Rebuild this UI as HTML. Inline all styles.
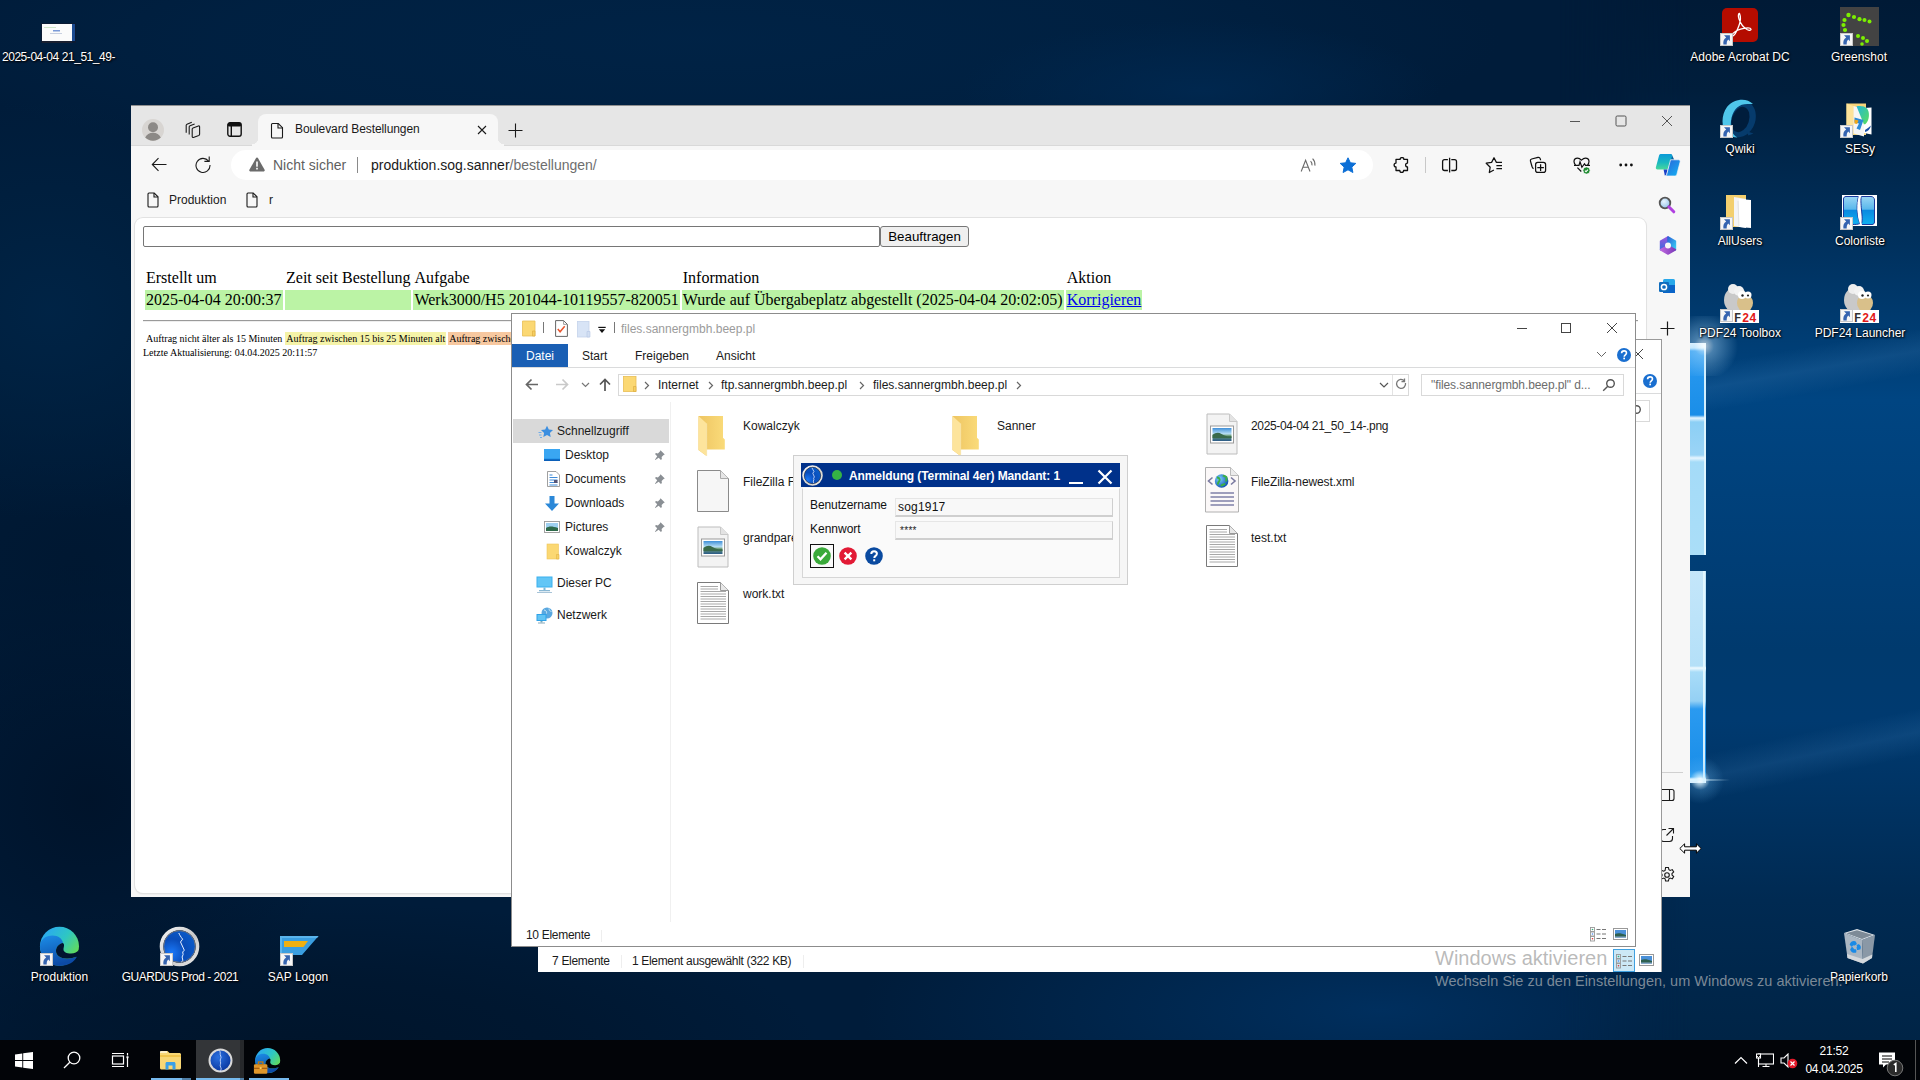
<!DOCTYPE html>
<html><head><meta charset="utf-8">
<style>
*{box-sizing:border-box}
html,body{margin:0;padding:0;width:1920px;height:1080px;overflow:hidden}
body{position:relative;font-family:"Liberation Sans",sans-serif;font-size:12px;color:#000;background:#001c3a}
.a{position:absolute}
.dt{position:absolute;color:#fff;font-size:12px;text-align:center;text-shadow:0 0 2px #000,1px 1px 2px #000;white-space:nowrap;line-height:15px}
/* browser */
#br{left:131px;top:105px;width:1559px;height:792px;background:#f7f7f7;overflow:hidden}
#tabs{left:0;top:0;width:1559px;height:41px;background:#e6e6e6;border-bottom:1px solid #d9d9d9}
#card{left:4px;top:113px;width:1511px;height:675px;background:#fff;border-radius:8px;box-shadow:0 0 0 1px #e2e2e2,0 1px 2px rgba(0,0,0,.12)}
.serif{font-family:"Liberation Serif",serif}
/* explorer */
.ex{position:absolute;background:#fff;border:1px solid #9a9a9a;overflow:hidden}
/* taskbar */
#tb{left:0;top:1040px;width:1920px;height:40px;background:#020408}
</style></head>
<body>

<svg width="0" height="0" style="position:absolute">
 <defs>
  <linearGradient id="fback" x1="0" y1="0" x2="1" y2="0"><stop offset="0" stop-color="#eec562"/><stop offset="1" stop-color="#fadb7a"/></linearGradient>
  <linearGradient id="imgsky" x1="0" y1="0" x2="0" y2="1"><stop offset="0" stop-color="#3f8fd8"/><stop offset=".45" stop-color="#b8def4"/><stop offset=".6" stop-color="#6a9a70"/><stop offset="1" stop-color="#2a5a8a"/></linearGradient>
  <radialGradient id="globe" cx=".35" cy=".35" r=".7"><stop offset="0" stop-color="#7fd0ff"/><stop offset="1" stop-color="#0b4fb0"/></radialGradient>
  <symbol id="bigfolder" viewBox="0 0 32 42">
   <path d="M1.5 2H26V23.8l1.8 1.7V35.6H9.5V42L1.5 36z" fill="url(#fback)"/>
   <path d="M1.5 2L9.7 9.5V42L1.5 36z" fill="#fde49c"/>
   <path d="M9.7 9.5V42" stroke="#f7eab8" stroke-width=".6"/>
  </symbol>
  <symbol id="blankdoc" viewBox="0 0 32 42">
   <path d="M.5 .5H23.5L31.5 8.5V41.5H.5z" fill="#f6f6f6" stroke="#8a8a8a" stroke-width="1"/>
   <path d="M23.5 .5V8.5H31.5" fill="#e6e6e6" stroke="#aaa" stroke-width="1"/>
  </symbol>
  <symbol id="imgdoc" viewBox="0 0 32 42">
   <path d="M1 1H23.5L31 8.5V41H1z" fill="#f3f3f3" stroke="#bdbdbd" stroke-width="1"/>
   <path d="M23.5 1V8.5H31" fill="#e3e3e3" stroke="#c8c8c8" stroke-width="1"/>
   <rect x="4.5" y="13" width="23" height="17" fill="#fff" stroke="#9a9a9a" stroke-width="1"/>
   <rect x="6.5" y="15" width="19" height="13" fill="url(#imgsky)"/>
   <path d="M6.5 22c3-2.5 6-3 9-1s6 2.5 10 2.2V25H6.5z" fill="#3a6a4a"/>
  </symbol>
  <symbol id="txtdoc" viewBox="0 0 32 42">
   <path d="M.5 .5H23.5L31.5 8.5V41.5H.5z" fill="#fff" stroke="#7a7a7a" stroke-width="1"/>
   <path d="M23.5 .5V8.5H31.5" fill="#e8e8e8" stroke="#9a9a9a" stroke-width="1"/>
   <g stroke="#a8a8a8" stroke-width="1"><path d="M3.5 4.5H21M3.5 7H21M3.5 9.5H29M3.5 12H29M3.5 14.5H29M3.5 17H29M3.5 19.5H29M3.5 22H29M3.5 24.5H29M3.5 27H29M3.5 29.5H29M3.5 32H29M3.5 34.5H29M3.5 37H29"/></g>
  </symbol>
  <symbol id="xmldoc" viewBox="0 0 36 47">
   <path d="M1.5 1.5H26.5L34.5 9.5V46H1.5z" fill="#fbf8f8" stroke="#b0b0b0" stroke-width="1"/>
   <path d="M26.5 1.5V9.5H34.5" fill="#ececec" stroke="#bbb" stroke-width="1"/>
   <circle cx="17.6" cy="15" r="6.8" fill="url(#globe)"/>
   <path d="M13 11.5c2 0 3 1.5 2.5 3s-2 2-1.5 4M19 9.5c1.5 1 3 .5 3.5 2s-1 2.5 0 4M17 20c1-1.5 3-1 4-2.5" stroke="#3cb043" stroke-width="2" fill="none"/>
   <path d="M8.5 11.5L4.5 15l4 3.5M27 11.5L31 15l-4 3.5" stroke="#7a7aa0" stroke-width="1.6" fill="none"/>
   <g stroke="#8080a8" stroke-width="1.6"><path d="M6.5 27H30M6.5 31H30M6.5 35H30M6.5 39H30"/></g>
  </symbol>
  <symbol id="smfolder" viewBox="0 0 16 16">
   <path d="M1.5 1.5H12.5V10.8l1.3 1.2V15H5.5z" fill="#f0c75e"/>
   <path d="M1.5 1.5L5.5 3V15L1.5 14z" fill="#fde59e"/>
   <rect x="1.5" y="1.5" width="11.5" height="13.5" fill="#fbd874"/>
   <path d="M12 11h1.8v4H12z" fill="#f3cc63"/>
   <path d="M11.8 10.7v4.3" stroke="#e8b94a" stroke-width=".8"/>
  </symbol>
  <symbol id="pin" viewBox="0 0 12 12"><path d="M6.5 1.2l4.3 4.3-1.2.6-2 2 .3 1.9-1 1-2.2-2.2L1.3 11.1.9 10.7l2.3-3.4L1 5.1l1-1 1.9.3 2-2z" fill="#8a8f94"/></symbol>
  <symbol id="sc" viewBox="0 0 13 13"><rect x="0" y="0" width="13" height="13" fill="#f6f6f6"/><rect x=".5" y=".5" width="12" height="12" fill="none" stroke="#c8c8c8" stroke-width="1"/><path d="M9.9 2.2V8.2L8.3 6.6C7 7.6 6.6 9.3 6.7 11.6L3.4 11.6C3 8.4 3.8 6 6.2 4.6L4 2.2Z" fill="#3564b0"/></symbol>
 </defs>
</svg>
<!-- wallpaper -->
<div class="a" style="left:0;top:0;width:1920px;height:1040px;background:
 radial-gradient(ellipse 520px 150px at 1380px 1010px, rgba(0,48,96,0.95) 0%, rgba(0,44,88,0.6) 50%, rgba(0,36,72,0) 100%),
 radial-gradient(ellipse 520px 150px at 300px 1050px, rgba(0,20,42,0.95) 0%, rgba(0,20,42,0.6) 50%, rgba(0,20,42,0) 100%),
 radial-gradient(ellipse 240px 70px at 1200px 90px, rgba(0,40,80,0.9) 0%, rgba(0,40,80,0) 100%),
 radial-gradient(ellipse 800px 140px at 700px 40px, rgba(0,35,70,0.95) 0%, rgba(0,34,68,0.7) 60%, rgba(0,30,60,0) 100%),
 radial-gradient(ellipse 240px 210px at 50px 310px, rgba(0,36,70,0.95) 0%, rgba(0,34,66,0.6) 50%, rgba(0,30,60,0) 100%),
 radial-gradient(ellipse 300px 200px at 80px 560px, rgba(0,22,46,0.7) 0%, rgba(0,22,46,0) 100%),
 radial-gradient(ellipse 250px 240px at 90px 800px, rgba(0,18,40,0.85) 0%, rgba(0,18,40,0) 100%),
 #001c3a"></div>
<div class="a" style="left:1560px;top:0;width:360px;height:1040px;background:linear-gradient(180deg,#001a36 0,#001e3c 90px,#003260 255px,#004582 400px,#003e76 560px,#003a6e 650px,#003a70 720px,#002a52 900px,#002446 1040px);-webkit-mask-image:linear-gradient(90deg,transparent 0,#000 130px);mask-image:linear-gradient(90deg,transparent 0,#000 130px)"></div>
<!-- light rays -->
<div class="a" style="left:1700px;top:330px;width:220px;height:80px;background:linear-gradient(170deg, rgba(140,200,255,0) 30%, rgba(140,200,255,0.10) 50%, rgba(140,200,255,0) 70%)"></div>
<div class="a" style="left:1700px;top:700px;width:220px;height:110px;background:linear-gradient(-12deg, rgba(140,200,255,0) 35%, rgba(120,190,255,0.10) 50%, rgba(140,200,255,0) 65%)"></div>
<!-- windows logo panes (only right edges visible) -->
<div class="a" style="left:1600px;top:343px;width:106px;height:212px;background:linear-gradient(180deg,#eef8ff 0,#cfeeff 5px,#2a9af0 8px,#1a8ee8 72px,#e8f6ff 75px,#8ccff5 79px,#9ad4f6 112px,#e8f6ff 115px,#a4dbf8 119px,#aadef8 212px)"></div>
<div class="a" style="left:1704px;top:343px;width:2px;height:212px;background:rgba(230,248,255,0.9)"></div>
<div class="a" style="left:1600px;top:571px;width:106px;height:212px;background:linear-gradient(180deg,#c4e6fa 0,#b4e0f8 95px,#f0faff 97px,#a8dcf8 101px,#94d0f4 130px,#2a9af0 138px,#1a8ee8 200px,#2aa0f0 206px,#f4fbff 208px)"></div>
<div class="a" style="left:1703px;top:571px;width:2px;height:212px;background:rgba(230,248,255,0.9)"></div>
<div class="a" style="left:1670px;top:750px;width:60px;height:60px;background:radial-gradient(circle at 50% 50%, rgba(255,255,255,0.95) 0, rgba(210,240,255,0.75) 4px, rgba(120,200,255,0.22) 10px, rgba(120,200,255,0) 24px)"></div>
<div class="a" style="left:1690px;top:779px;width:40px;height:2px;background:linear-gradient(90deg,rgba(220,245,255,.8),rgba(220,245,255,0))"></div>
<div class="a" style="left:1676px;top:316px;width:70px;height:60px;background:radial-gradient(circle at 40% 50%, rgba(255,255,255,0.7) 0, rgba(180,225,255,0.4) 10px, rgba(120,200,255,0) 34px)"></div>

<!-- desktop icons -->
<svg class="a" style="left:41px;top:23px" width="35" height="20" viewBox="0 0 35 20"><rect x="0" y="0" width="35" height="20" fill="#0a1a33"/><rect x="1" y="1" width="30" height="17" fill="#fbfbfb"/><rect x="31" y="1" width="3" height="17" fill="#1a4a90"/><rect x="3" y="4" width="12" height="1" fill="#cfe6c9"/><rect x="12" y="7" width="7" height="1.5" fill="#7a9ad8"/><rect x="9" y="10" width="12" height="1" fill="#c8d0e0"/><rect x="1" y="18" width="30" height="2" fill="#1a2030"/></svg>
<div class="dt" style="left:0;top:50px;width:117px;letter-spacing:-0.45px">2025-04-04 21_51_49-</div>

<svg class="a" style="left:1722px;top:8px" width="36" height="34" viewBox="0 0 36 34"><rect x="0" y="0" width="36" height="34" rx="5" fill="#b40c00"/><path d="M17.5 5.5c-1.3 0-1.5 2.5-.5 5.5 1.5 4.5 4.5 8.5 8 10.5 2.5 1.3 4.2.8 4-.3-.3-1.2-3.2-1.5-7-.8-4 .7-8.5 2.5-11 5-1.5 1.5-1.5 2.8-.5 2.6 1.5-.3 4.5-5 6.5-10.5 1.3-3.6 2-8.6.5-12z" fill="none" stroke="#fff" stroke-width="1.3"/></svg>
<svg class="a" style="left:1720px;top:33px" width="13" height="13"><use href="#sc"/></svg>
<div class="dt" style="left:1670px;top:50px;width:140px">Adobe Acrobat DC</div>

<svg class="a" style="left:1840px;top:7px" width="39" height="39" viewBox="0 0 39 39"><rect width="39" height="39" fill="#434343"/><g fill="#7cf000"><circle cx="8.5" cy="8" r="2.2"/><circle cx="14" cy="10" r="2.1"/><circle cx="19.5" cy="12.2" r="2.1"/><circle cx="24.5" cy="13" r="2"/><circle cx="29.5" cy="14.5" r="2"/><circle cx="4.5" cy="13" r="2.1"/><circle cx="3.5" cy="18" r="2.1"/><circle cx="5" cy="23" r="2.1"/><circle cx="18" cy="29" r="2"/><circle cx="23" cy="31" r="2"/><circle cx="27" cy="34" r="2"/><circle cx="22" cy="37" r="1.8"/></g></svg>
<svg class="a" style="left:1840px;top:33px" width="13" height="13"><use href="#sc"/></svg>
<div class="dt" style="left:1800px;top:50px;width:118px">Greenshot</div>

<svg class="a" style="left:1715px;top:95px" width="50" height="50" viewBox="0 0 50 50"><ellipse cx="25" cy="23.5" rx="15.5" ry="19" transform="rotate(18 25 23.5)" fill="#063b6c"/><path d="M31 36l7.5 2.5-5 2z" fill="#063b6c"/><ellipse cx="25.5" cy="24.5" rx="8.5" ry="13" transform="rotate(18 25.5 24.5)" fill="#001d3c"/><path d="M38 9C31.5 2.5 19 3.5 12 12 6 20 6 33 12 39c3 2.5 7 3.5 10.5 3.5-5.5-3-7.5-8.5-6.5-16.5 1-9 6-16 13.5-16.8 3-.3 6-.4 8.5-.2z" fill="#4fc6ea"/></svg>
<svg class="a" style="left:1720px;top:125px" width="13" height="13"><use href="#sc"/></svg>
<div class="dt" style="left:1690px;top:142px;width:100px">Qwiki</div>

<svg class="a" style="left:1846px;top:103px" width="26" height="34" viewBox="0 0 26 34"><defs><linearGradient id="sg" x1="0" y1="0" x2="1" y2="1"><stop offset="0" stop-color="#22b8d8"/><stop offset="1" stop-color="#5ade5a"/></linearGradient></defs><path d="M.5 .5H20V32H.5z" fill="#f6d47a"/><path d="M.5 .5L7.5 3V32H.5z" fill="#fde39a"/><path d="M7.5 3L18 6V33.5L7.5 30.5z" fill="#f6f6f6"/><path d="M18 5L25.5 4.5V31.5L18 30z" fill="#fff"/><path d="M10.5 3.2C14.5 2.5 19 3 21 5.5 24 9 23.5 17 20 20.5 19 21.5 18 21.5 17.8 21z" fill="url(#sg)"/><path d="M8.5 14.5L17.5 17 14 27 10.5 25.5 13 20.5 8.5 19.5z" fill="#2a8ad8"/><path d="M8.5 16.5L12.5 17.5 11 21 8.5 20.5z" fill="#f0a818"/><path d="M19 27C21 26 23 24 25 22.5 24 26 22 28.5 19 29z" fill="#1a50a8"/></svg>
<svg class="a" style="left:1840px;top:125px" width="13" height="13"><use href="#sc"/></svg>
<div class="dt" style="left:1810px;top:142px;width:100px">SESy</div>

<svg class="a" style="left:1726px;top:195px" width="26" height="34" viewBox="0 0 26 34"><path d="M0 0h20v24l5 2V32H0z" fill="#f3cf6e"/><path d="M8 2L20 4V33L8 31z" fill="#f4f4f6"/><path d="M13 4L25 5V33L13 32z" fill="#fff"/><path d="M12 6L13 31" stroke="#ddd" stroke-width=".8"/></svg>
<svg class="a" style="left:1720px;top:217px" width="13" height="13"><use href="#sc"/></svg>
<div class="dt" style="left:1690px;top:234px;width:100px">AllUsers</div>

<svg class="a" style="left:1842px;top:195px" width="35" height="31" viewBox="0 0 35 31"><defs><linearGradient id="clg" x1="0" y1="0" x2="0" y2="1"><stop offset="0" stop-color="#9ad6f4"/><stop offset=".45" stop-color="#5ab8ec"/><stop offset=".5" stop-color="#0a8ae0"/><stop offset="1" stop-color="#10b0f0"/></linearGradient></defs><rect width="35" height="31" fill="#fff"/><path d="M4 1.5H16.5C14.5 8 14.5 20 18 28.5 16 29.5 13 29.5 10 29.5H4C2.3 29.5 1.5 28.5 1.5 27V4C1.5 2.5 2.5 1.5 4 1.5Z" fill="url(#clg)" stroke="#1a3aa0" stroke-width="1"/><path d="M19.5 1.5H29C31 1.5 32.5 3 32.5 5V27C32.5 28.5 31.5 29.5 30 29.5H19C21 27 20 20 19.5 15 19 9 18.5 4 19.5 1.5Z" fill="url(#clg)" stroke="#1a3aa0" stroke-width="1"/><path d="M17.8 .5C15.5 8 15.5 21 19.3 30.5" stroke="#fff" stroke-width="1.8" fill="none"/></svg>
<svg class="a" style="left:1840px;top:217px" width="13" height="13"><use href="#sc"/></svg>
<div class="dt" style="left:1810px;top:234px;width:100px">Colorliste</div>

<svg class="a" style="left:1720px;top:283px" width="40" height="40" viewBox="0 0 40 40"><ellipse cx="16" cy="17" rx="12" ry="13" fill="#c9c9c9"/><circle cx="13" cy="6" r="5" fill="#eee"/><circle cx="19" cy="8" r="5" fill="#f2f2f2"/><ellipse cx="25" cy="20" rx="8" ry="9" fill="#d9c08a"/><circle cx="22" cy="12" r="4" fill="#fff"/><circle cx="28" cy="12" r="3.5" fill="#fff"/><circle cx="22.5" cy="12.5" r="1.2" fill="#222"/><circle cx="28" cy="12.5" r="1.1" fill="#222"/><rect x="0" y="27" width="39" height="13" fill="#fff"/><text x="14" y="38.5" font-family="Liberation Mono" font-weight="bold" font-size="12" fill="#333">F</text><text x="22" y="38.5" font-family="Liberation Mono" font-weight="bold" font-size="12" fill="#e21a1a">24</text></svg>
<svg class="a" style="left:1720px;top:309px" width="13" height="13"><use href="#sc"/></svg>
<div class="dt" style="left:1680px;top:326px;width:120px">PDF24 Toolbox</div>

<svg class="a" style="left:1840px;top:283px" width="40" height="40" viewBox="0 0 40 40"><ellipse cx="16" cy="17" rx="12" ry="13" fill="#c9c9c9"/><circle cx="13" cy="6" r="5" fill="#eee"/><circle cx="19" cy="8" r="5" fill="#f2f2f2"/><ellipse cx="25" cy="20" rx="8" ry="9" fill="#d9c08a"/><circle cx="22" cy="12" r="4" fill="#fff"/><circle cx="28" cy="12" r="3.5" fill="#fff"/><circle cx="22.5" cy="12.5" r="1.2" fill="#222"/><circle cx="28" cy="12.5" r="1.1" fill="#222"/><rect x="0" y="27" width="39" height="13" fill="#fff"/><text x="14" y="38.5" font-family="Liberation Mono" font-weight="bold" font-size="12" fill="#333">F</text><text x="22" y="38.5" font-family="Liberation Mono" font-weight="bold" font-size="12" fill="#e21a1a">24</text></svg>
<svg class="a" style="left:1840px;top:309px" width="13" height="13"><use href="#sc"/></svg>
<div class="dt" style="left:1790px;top:326px;width:140px">PDF24 Launcher</div>

<svg class="a" style="left:1843px;top:928px" width="33" height="37" viewBox="0 0 33 37"><path d="M1 5L19 12 20 35.5 4.5 30z" fill="#aab6c2"/><path d="M19 12L32 7 29 30 20 35.5z" fill="#8a98a6"/><path d="M4 26L19.5 31 29.3 26.5 29 30 20 35.5 4.5 30z" fill="#d4d8dc"/><path d="M1 5L14 1 32 7 19 12z" fill="#dfe5ea"/><path d="M3.2 5.3L14 2.2 29.6 7.1 19 10.9z" fill="#7d8a97"/><path d="M7.5 16.5c.8-2 2.8-3 4.5-2.5l1 1.8-1.8 1c-1-.6-2 0-2.5 1zM15.5 17c1.2.8 1.8 2.5 1.2 3.8l-2 .5-.3-1.8c.8-.5.6-1.3 0-1.8zM12.5 24c-2 .3-3.8-.8-4.5-2.4l1-1.8 1.3 1.5c.5.8 1.4 1 2.2.7z" fill="#1a8ae6" stroke="#1a8ae6" stroke-width="1.6" stroke-linejoin="round"/></svg>
<div class="dt" style="left:1800px;top:970px;width:118px">Papierkorb</div>

<svg class="a" style="left:35px;top:922px" width="50" height="50" viewBox="0 0 50 50"><defs><linearGradient id="eg1" x1=".1" y1=".1" x2=".95" y2=".75"><stop offset="0" stop-color="#2aa8f2"/><stop offset=".5" stop-color="#2ec6c4"/><stop offset="1" stop-color="#6ade4a"/></linearGradient><linearGradient id="eg2" x1="0" y1="0" x2=".3" y2="1"><stop offset="0" stop-color="#1c8ee8"/><stop offset="1" stop-color="#0c4aa6"/></linearGradient></defs><circle cx="24.5" cy="24.3" r="19.5" fill="url(#eg1)"/><path d="M5 24.3C5 17.5 11 13.5 17.5 13.5 23.5 13.5 27.5 17 28 21 24 21.5 21 25 21 29 21 33 25 36.5 32 36.5 35.5 36.5 39 35.8 42 34.5 39 40.5 32.5 44 24.5 44 13.7 44 5 35 5 24.3Z" fill="url(#eg2)"/><path d="M28 21C30 22.5 28.5 25.5 28.5 27.5 28.5 30 31.5 31.5 36 31.5 39.5 31.5 42.5 30 44 27.5 43.7 30 43 32.5 42 34.5 39 35.8 35.5 36.5 32 36.5 25 36.5 21 33 21 29 21 25 24 21.5 28 21Z" fill="#011430"/></svg>
<svg class="a" style="left:40px;top:953px" width="13" height="13"><use href="#sc"/></svg>
<div class="dt" style="left:0;top:970px;width:119px">Produktion</div>

<svg class="a" style="left:155px;top:922px" width="50" height="50" viewBox="0 0 50 50"><defs><radialGradient id="gg" cx=".25" cy=".7" r=".8"><stop offset="0" stop-color="#1a78f8"/><stop offset=".55" stop-color="#0a4cb8"/><stop offset="1" stop-color="#0a5ac8"/></radialGradient><linearGradient id="gr" x1="0" y1="0" x2="1" y2="1"><stop offset="0" stop-color="#f6f6f6"/><stop offset=".55" stop-color="#c8c8c8"/><stop offset="1" stop-color="#e8e8e8"/></linearGradient></defs><circle cx="24.5" cy="24.5" r="18" fill="none" stroke="url(#gr)" stroke-width="3.6"/><circle cx="24.5" cy="24.5" r="15.8" fill="url(#gg)" stroke="#7a7a80" stroke-width=".8"/><path d="M23.8 11c.8 2 1.8 3.5 3.8 6.2L25.5 20l3.8 8.2-1.6 1.8.4 2.5-1 2.5.8 3.5-1.6 1.5" stroke="#e8f0ff" stroke-width="1" fill="none"/></svg>
<svg class="a" style="left:160px;top:953px" width="13" height="13"><use href="#sc"/></svg>
<div class="dt" style="left:110px;top:970px;width:140px;letter-spacing:-0.5px">GUARDUS Prod - 2021</div>

<svg class="a" style="left:280px;top:936px" width="39" height="30" viewBox="0 0 39 30"><path d="M0 0h38.5L22 19H4V30H0z" fill="#3a9ee0"/><path d="M0 0h38.5L37 2H2V30H0z" fill="#5ab4ec"/><path d="M4 5h24l-4.5 6H4z" fill="#f0b010"/></svg>
<svg class="a" style="left:280px;top:953px" width="13" height="13"><use href="#sc"/></svg>
<div class="dt" style="left:248px;top:970px;width:100px">SAP Logon</div>

<!-- browser -->
<div id="br" class="a">

 <div id="tabs" class="a"></div>
 <div class="a" style="left:0;top:0;width:1559px;height:1px;background:#8f8f8f"></div>
 <!-- avatar -->
 <svg class="a" style="left:10px;top:13px" width="24" height="24" viewBox="0 0 24 24"><circle cx="12" cy="12" r="11" fill="#d8d5d2"/><circle cx="12" cy="9.2" r="5" fill="#8c8986"/><path d="M4.2 19.6c1.4-3.4 4.2-4.9 7.8-4.9s6.4 1.5 7.8 4.9c-2 2-4.8 3.2-7.8 3.2s-5.8-1.2-7.8-3.2z" fill="#8c8986"/></svg>
 <!-- workspaces -->
 <svg class="a" style="left:53px;top:15px" width="18" height="19" viewBox="0 0 18 19" fill="none" stroke="#1a1a1a" stroke-width="1.1" stroke-linejoin="round"><path d="M2.2 12.8V5.3c0-.5.3-.9.8-1.1L7.8 2.3"/><path d="M5.2 14.5V6.8c0-.5.3-.9.8-1.1L10.6 3.9"/><path d="M8.2 16.6V9c0-.5.3-.9.8-1.1l5.4-2c.6-.2 1.2.2 1.2.8v7.6c0 .5-.3.9-.8 1.1l-5.4 2c-.6.2-1.2-.2-1.2-.8z"/></svg>
 <!-- tab actions -->
 <svg class="a" style="left:96px;top:17px" width="15" height="15" viewBox="0 0 15 15"><rect x=".8" y=".8" width="13.4" height="13.4" rx="2.2" fill="none" stroke="#111" stroke-width="1.4"/><rect x=".8" y=".8" width="13.4" height="3.6" rx="1.5" fill="#111"/><rect x="3.6" y="3" width="1.4" height="11" fill="#111"/></svg>
 <!-- active tab -->
 <div class="a" style="left:127px;top:9px;width:240px;height:32px;background:#f7f7f7;border-radius:8px 8px 0 0"></div>
 <div class="a" style="left:121px;top:33px;width:6px;height:8px;background:radial-gradient(circle at 0 0,#e6e6e6 6px,#f7f7f7 6.5px)"></div>
 <div class="a" style="left:367px;top:33px;width:6px;height:8px;background:radial-gradient(circle at 100% 0,#e6e6e6 6px,#f7f7f7 6.5px)"></div>
 <svg class="a" style="left:139px;top:17px" width="14" height="17" viewBox="0 0 14 17" fill="none" stroke="#1a1a1a" stroke-width="1.1"><path d="M1.5 2.5c0-.6.4-1 1-1h5.8l4.2 4.2v9.3c0 .6-.4 1-1 1h-9c-.6 0-1-.4-1-1z"/><path d="M8 1.5v4.5h4.5"/></svg>
 <div class="a" style="left:164px;top:16px;font-size:12px;color:#1a1a1a;white-space:nowrap;line-height:16px;letter-spacing:-0.1px">Boulevard Bestellungen</div>
 <svg class="a" style="left:346px;top:20px" width="10" height="10" viewBox="0 0 10 10" stroke="#1a1a1a" stroke-width="1.1"><path d="M1 1l8 8M9 1l-8 8"/></svg>
 <svg class="a" style="left:377px;top:18px" width="15" height="15" viewBox="0 0 15 15" stroke="#1a1a1a" stroke-width="1.1"><path d="M7.5 0.5v14M0.5 7.5h14"/></svg>
 <!-- window controls -->
 <svg class="a" style="left:1439px;top:11px" width="10" height="10" viewBox="0 0 10 10" stroke="#555" stroke-width="1"><path d="M0 5.5h10"/></svg>
 <svg class="a" style="left:1484px;top:10px" width="12" height="12" viewBox="0 0 12 12" fill="none" stroke="#555" stroke-width="1"><rect x="1" y="1" width="10" height="10" rx="1.2"/></svg>
 <svg class="a" style="left:1530px;top:10px" width="12" height="12" viewBox="0 0 12 12" stroke="#555" stroke-width="1"><path d="M1 1l10 10M11 1l-10 10"/></svg>
 <!-- address bar -->
 <div class="a" style="left:100px;top:45px;width:1142px;height:30px;background:#fff;border-radius:15px"></div>
 <svg class="a" style="left:19px;top:50px" width="18" height="18" viewBox="0 0 18 18" fill="none" stroke="#1a1a1a" stroke-width="1.1"><path d="M16.5 9.5H2.5M8.5 3.2L2.3 9.5l6.2 6.3"/></svg>
 <svg class="a" style="left:63px;top:50px" width="18" height="18" viewBox="0 0 18 18" fill="none" stroke="#1a1a1a" stroke-width="1.1"><path d="M14.6 6.2A7 7 0 1 0 16 10"/><path d="M15.2 1.6v4.8h-4.8"/></svg>
 <svg class="a" style="left:118px;top:52px" width="16" height="15" viewBox="0 0 16 15"><path d="M8 0.6c.5 0 .9.3 1.2.8l6.4 11.3c.5.9-.1 1.9-1.2 1.9H1.6C.5 14.6-.1 13.6.4 12.7L6.8 1.4C7.1.9 7.5.6 8 .6z" fill="#6b6b6b"/><rect x="7.2" y="4.5" width="1.6" height="5.2" fill="#fff"/><rect x="7.2" y="10.8" width="1.6" height="1.7" fill="#fff"/></svg>
 <div class="a" style="left:142px;top:157px;"></div>
 <div class="a" style="left:142px;top:50px;font-size:14px;color:#5f5f5f;white-space:nowrap;line-height:20px">Nicht sicher</div>
 <div class="a" style="left:226px;top:52px;width:1px;height:16px;background:#8a8a8a"></div>
 <div class="a" style="left:240px;top:50px;font-size:14px;color:#1a1a1a;white-space:nowrap;line-height:20px">produktion.sog.sanner<span style="color:#6e6e6e">/bestellungen/</span></div>
 <!-- read aloud -->
 <svg class="a" style="left:1169px;top:52px" width="18" height="16" viewBox="0 0 18 16" fill="none" stroke="#6a6a6a" stroke-width="1.1"><path d="M1.2 14.5L5.6 3.2 10 14.5M2.8 10.3H8.4"/><path d="M10.6 4.2Q12.2 5.8 12 8.4M12.6 1.6Q15.3 4.3 14.9 8.6"/></svg>
 <svg class="a" style="left:1208px;top:52px" width="18" height="17" viewBox="0 0 18 17"><path d="M9 .8l2.4 5 5.4.6-4 3.7 1.1 5.4L9 12.8l-4.9 2.7 1.1-5.4-4-3.7 5.4-.6z" fill="#0c6fd6" stroke="#0c6fd6" stroke-width="1" stroke-linejoin="round"/></svg>
 <!-- toolbar icons -->
 <svg class="a" style="left:1262px;top:52px" width="18" height="18" viewBox="0 0 18 18" fill="none" stroke="#111" stroke-width="1.3" stroke-linejoin="round"><path d="M3 2.4H7.1A1.9 1.9 0 0 1 10.9 2.4H14.5V6.1A1.9 1.9 0 0 0 14.5 9.9V13.5H10.6A1.9 1.9 0 0 1 6.8 13.5H3V9.9A1.9 1.9 0 0 1 3 6.1Z"/></svg>
 <div class="a" style="left:1294px;top:52px;width:1px;height:16px;background:#c8c8c8"></div>
 <svg class="a" style="left:1310px;top:52px" width="18" height="18" viewBox="0 0 18 18" fill="none" stroke="#111" stroke-width="1.3"><path d="M6.9 2.6H3.6Q1.6 2.6 1.6 4.6V11.5Q1.6 13.5 3.6 13.5H6.9M10.3 2.6H13.5Q15.5 2.6 15.5 4.6V11.5Q15.5 13.5 13.5 13.5H10.3M8.6 .8V15.6"/></svg>
 <svg class="a" style="left:1354px;top:51px" width="18" height="18" viewBox="0 0 18 18" fill="none" stroke="#111" stroke-width="1.25" stroke-linejoin="round"><path d="M8.9 14L4.3 16.5 5.2 11.2 1.2 7.2 6.6 6.4 9 1.7 11.4 6.4H17M11.4 9.5H17M11.4 12.5H17"/></svg>
 <svg class="a" style="left:1398px;top:51px" width="18" height="18" viewBox="0 0 18 18" fill="none" stroke="#111" stroke-width="1.25"><path d="M4.6 12.7C3.6 12.3 3.2 11.5 3 10.5L1.4 4.8C1.2 3.9 1.8 3.2 2.6 3L9 1.4C10.3 1.1 11.4 1.9 11.6 4.3"/><rect x="6.6" y="6.4" width="10" height="10" rx="2.2"/><path d="M11.6 8.3V14.9M8.3 11.6H14.9"/></svg>
 <svg class="a" style="left:1442px;top:51px" width="18" height="18" viewBox="0 0 18 18" fill="none" stroke="#111" stroke-width="1.2"><path d="M2.6 9.3C1.5 7.9 1 6.9 1 5.6 1 3.6 2.6 2.1 4.6 2.1 6.1 2.1 7.3 3 8.5 4.2 9.7 3 10.9 2.1 12.4 2.1 14.4 2.1 16 3.6 16 5.6 16 6.9 15.6 7.9 14.5 9.3"/><path d="M1 9.3H6L7 5.7 8.9 11.3 11.5 7.7 12.5 9.3H17M4.4 11.6L8.3 15.5"/><circle cx="13.5" cy="14.5" r="3.6" fill="#1c8a2e" stroke="#f7f7f7" stroke-width=".8"/><path d="M11.9 14.6l1.1 1.1 2-2.1" stroke="#fff" stroke-width="1.1"/></svg>
 <svg class="a" style="left:1487px;top:58px" width="16" height="4" viewBox="0 0 16 4" fill="#111"><circle cx="2.7" cy="2" r="1.4"/><circle cx="8" cy="2" r="1.4"/><circle cx="13.4" cy="2" r="1.4"/></svg>
 <svg class="a" style="left:1524px;top:48px" width="26" height="24" viewBox="0 0 26 24"><defs><linearGradient id="cpa" x1="0" y1="0" x2="0" y2="1"><stop offset="0" stop-color="#0a9ad8"/><stop offset=".55" stop-color="#1ab8c0"/><stop offset="1" stop-color="#48d89a"/></linearGradient><linearGradient id="cpb" x1="0" y1="0" x2="1" y2="1"><stop offset="0" stop-color="#2a62d8"/><stop offset="1" stop-color="#14b4f4"/></linearGradient></defs><path d="M14.5 1C16 1 17 1.8 17.5 3L19.2 6.8H15.5Z" fill="#0a64a0"/><path d="M5.5 1H15.5C17 1 17.5 2 17.1 3.2L12.6 16.5H2.4C1.2 16.5.5 15.5.9 14.3L4 2.8C4.3 1.7 4.8 1 5.5 1Z" fill="url(#cpa)"/><path d="M8.6 16.5H12.6L11.3 21.8C11 22.8 10.3 23 9.8 22.6Z" fill="#1a40c8"/><path d="M15.5 6.8H23.6C24.8 6.8 25.4 7.8 25.1 9L21.9 21.2C21.6 22.3 20.9 23 19.8 23H10.1C11 23 11.5 22.4 11.7 21.6Z" fill="url(#cpb)" stroke="#f7f7f7" stroke-width=".7"/></svg>
 <!-- favorites bar -->
 <svg class="a" style="left:16px;top:87px" width="12" height="16" viewBox="0 0 12 16" fill="none" stroke="#1a1a1a" stroke-width="1.1"><path d="M1 2c0-.6.4-1 1-1h5.2L11 4.8V14c0 .6-.4 1-1 1H2c-.6 0-1-.4-1-1z"/><path d="M7 1v4h4"/></svg>
 <div class="a" style="left:38px;top:87px;font-size:12px;color:#1a1a1a;white-space:nowrap;line-height:16px">Produktion</div>
 <svg class="a" style="left:115px;top:87px" width="12" height="16" viewBox="0 0 12 16" fill="none" stroke="#1a1a1a" stroke-width="1.1"><path d="M1 2c0-.6.4-1 1-1h5.2L11 4.8V14c0 .6-.4 1-1 1H2c-.6 0-1-.4-1-1z"/><path d="M7 1v4h4"/></svg>
 <div class="a" style="left:138px;top:87px;font-size:12px;color:#1a1a1a;white-space:nowrap;line-height:16px">r</div>

 <div id="card" class="a"></div>
 <div class="a serif" style="left:12px;top:121px;width:737px;height:21px;border:1px solid #767676;border-radius:2px;background:#fff"></div>
 <div class="a" style="left:749px;top:121px;width:89px;height:21px;border:1px solid #767676;border-radius:3px;background:#efefef;font-size:13.333px;text-align:center;line-height:19px;color:#000">Beauftragen</div>
 <table class="a serif" style="left:12px;top:161px;border-spacing:2px;font-size:16px;line-height:18px;white-space:nowrap">
  <tr><td style="padding:1px;width:138px">Erstellt um</td><td style="padding:1px;width:126px">Zeit seit Bestellung</td><td style="padding:1px;width:266px">Aufgabe</td><td style="padding:1px;width:382px">Information</td><td style="padding:1px">Aktion</td></tr>
  <tr style="background:#bbf3a5"><td style="padding:1px">2025-04-04 20:00:37</td><td style="padding:1px"></td><td style="padding:1px">Werk3000/H5 201044-10119557-820051</td><td style="padding:1px">Wurde auf Übergabeplatz abgestellt (2025-04-04 20:02:05)</td><td style="padding:1px"><span style="color:#0000ee;text-decoration:underline">Korrigieren</span></td></tr>
 </table>
 <div class="a" style="left:12px;top:215px;width:1495px;height:2px;border-top:1px solid #9a9a9a;border-bottom:1px solid #eee"></div>
 <table class="a serif" style="left:12px;top:225px;border-spacing:2px;font-size:10px;line-height:11px;white-space:nowrap">
  <tr><td style="padding:1px">Auftrag nicht älter als 15 Minuten</td><td style="padding:1px;background:#f5f3a8">Auftrag zwischen 15 bis 25 Minuten alt</td><td style="padding:1px;background:#f7c8a0">Auftrag zwischen 25 bis 35 Minuten alt</td></tr>
 </table>
 <div class="a serif" style="left:12px;top:242px;font-size:10px;line-height:11px;white-space:nowrap">Letzte Aktualisierung: 04.04.2025 20:11:57</div>
 <!-- sidebar -->
 <svg class="a" style="left:1527px;top:91px" width="18" height="18" viewBox="0 0 18 18"><defs><radialGradient id="mg" cx=".4" cy=".35" r=".7"><stop offset="0" stop-color="#e8f4ff"/><stop offset="1" stop-color="#8fc0e8"/></radialGradient></defs><circle cx="7" cy="7" r="5.3" fill="url(#mg)" stroke="#555" stroke-width="1.8"/><path d="M10.8 10.8l5 5" stroke="#b040e0" stroke-width="3" stroke-linecap="round"/></svg>
 <svg class="a" style="left:1527px;top:131px" width="20" height="20" viewBox="0 0 20 20"><defs><linearGradient id="m1" x1="0" y1="0" x2="1" y2="1"><stop offset="0" stop-color="#2a62d8"/><stop offset="1" stop-color="#38d0f4"/></linearGradient><linearGradient id="m2" x1="0" y1="0" x2="1" y2="0"><stop offset="0" stop-color="#c068e0"/><stop offset="1" stop-color="#7a3ab8"/></linearGradient><linearGradient id="m4" x1="0" y1="0" x2="0" y2="1"><stop offset="0" stop-color="#9a58dc"/><stop offset="1" stop-color="#3a6ade"/></linearGradient></defs><g stroke-linejoin="round" stroke-width="1.6"><path d="M2.6 13.75V5.25L10 1V6.6L7.2 8V11.1Z" fill="url(#m4)" stroke="url(#m4)"/><path d="M10 1L17.4 5.25V13.75L12.8 11.1V8L10 6.6Z" fill="url(#m1)" stroke="url(#m1)"/><path d="M17.4 13.75L10 18 2.6 13.75 7.2 11.1 12.8 11.1Z" fill="url(#m2)" stroke="url(#m2)"/></g><circle cx="10" cy="9.5" r="3" fill="#f7f7f7"/></svg>
 <svg class="a" style="left:1527px;top:172px" width="18" height="18" viewBox="0 0 18 18"><rect x="5" y="2" width="12" height="14" rx="1.5" fill="#28a8ea"/><rect x="5" y="8" width="12" height="8" fill="#0a64c8"/><rect x="1" y="5" width="10" height="10" rx="1.3" fill="#0f6cbd"/><circle cx="6" cy="10" r="2.6" fill="none" stroke="#fff" stroke-width="1.5"/></svg>
 <svg class="a" style="left:1529px;top:216px" width="15" height="15" viewBox="0 0 15 15" stroke="#1a1a1a" stroke-width="1.2"><path d="M7.5 0.5v14M0.5 7.5h14"/></svg>
 <div class="a" style="left:1521px;top:667px;width:31px;height:1px;background:#d0d0d0"></div>
 <svg class="a" style="left:1528px;top:682px" width="16" height="16" viewBox="0 0 16 16" fill="none" stroke="#1a1a1a" stroke-width="1.1"><rect x="1" y="2.5" width="14" height="11" rx="2"/><path d="M10.5 2.5v11"/></svg>
 <svg class="a" style="left:1528px;top:722px" width="16" height="16" viewBox="0 0 16 16" fill="none" stroke="#1a1a1a" stroke-width="1.1"><path d="M7 2.5H4.5c-1.7 0-3 1.3-3 3v6c0 1.7 1.3 3 3 3h6c1.7 0 3-1.3 3-3V9"/><path d="M9.5 1.5h5v5M14.5 1.5L7.5 8.5"/></svg>
 <svg class="a" style="left:1527px;top:761px" width="18" height="18" viewBox="0 0 18 18" fill="none" stroke="#1a1a1a" stroke-width="1.1"><path d="M7.6 1.5h2.8l.5 2.2 1.3.7 2.1-.8 1.4 2.4-1.7 1.5v1.5l1.7 1.5-1.4 2.4-2.1-.8-1.3.7-.5 2.2H7.6l-.5-2.2-1.3-.7-2.1.8-1.4-2.4L4 9.8V8.3L2.3 6.8 3.7 4.4l2.1.8 1.3-.7z"/><circle cx="9" cy="9" r="2.3"/></svg>
</div>

<!-- back explorer -->
<div class="a" style="left:537px;top:339px;width:1125px;height:633px;background:#fff;background-clip:padding-box;border-left:1px solid transparent;border-top:1px solid #9a9a9a;border-right:1px solid #9a9a9a;font-size:12px;color:#1a1a1a;overflow:hidden">
  <svg class="a" style="left:1094px;top:8px" width="12" height="12" viewBox="0 0 12 12" stroke="#444" stroke-width="1"><path d="M1 1l10 10M11 1L1 11"/></svg>
  <svg class="a" style="left:1104px;top:33px" width="16" height="16" viewBox="0 0 16 16"><circle cx="8" cy="8" r="7" fill="#1a6fd0"/><path d="M5.6 6.2c0-1.4 1.1-2.3 2.5-2.3s2.4.9 2.4 2.2c0 1.9-2.3 1.8-2.3 3.7" fill="none" stroke="#fff" stroke-width="1.6"/><rect x="7.3" y="10.6" width="1.7" height="1.7" fill="#fff"/></svg>
  <div class="a" style="left:0;top:53px;width:1124px;height:1px;background:#dadbdc"></div>
  <div class="a" style="left:909px;top:60px;width:203px;height:22px;border:1px solid #d9d9d9;background:#fff"></div>
  <svg class="a" style="left:1090px;top:64px" width="14" height="14" viewBox="0 0 14 14" fill="none" stroke="#555" stroke-width="1.4"><circle cx="8.5" cy="5.5" r="3.8"/><path d="M5.8 8.2L1.2 12.8"/></svg>
  <div class="a" style="left:14px;top:614px;line-height:14px;white-space:nowrap;letter-spacing:-0.3px">7 Elemente</div>
  <div class="a" style="left:83px;top:615px;width:1px;height:13px;background:#eee"></div>
  <div class="a" style="left:94px;top:614px;line-height:14px;white-space:nowrap;letter-spacing:-0.33px">1 Element ausgewählt (322 KB)</div>
  <div class="a" style="left:265px;top:615px;width:1px;height:13px;background:#eee"></div>
  <div class="a" style="left:1075px;top:609px;width:22px;height:23px;background:#cce8f6;border:1px solid #3fa0e0"></div>
  <svg class="a" style="left:1078px;top:614px" width="18" height="15" viewBox="0 0 18 15"><g fill="none" stroke="#999" stroke-width=".9"><rect x=".5" y=".5" width="4" height="4"/><rect x=".5" y="5" width="4" height="4"/><rect x=".5" y="9.5" width="4" height="4.5"/></g><circle cx="2.5" cy="2.5" r=".8" fill="#3a7"/><circle cx="2.5" cy="7" r=".8" fill="#48e"/><circle cx="2.5" cy="11.7" r=".8" fill="#d33"/><g stroke="#777" stroke-width="1.2"><path d="M6.5 2.5h4M12 2.5h4M6.5 7h4M12 7h4M6.5 11.5h4M12 11.5h4"/></g></svg>
  <svg class="a" style="left:1101px;top:614px" width="15" height="12" viewBox="0 0 15 12"><rect x=".5" y=".5" width="14" height="11" fill="#fff" stroke="#999" stroke-width="1"/><rect x="2" y="2" width="11" height="8" fill="#4a90d8"/><path d="M2 6c3-1.5 6-1 11 1v3H2z" fill="#2e6050"/><rect x="2" y="8.5" width="11" height="1.5" fill="#8ac"/></svg>
</div>
<!-- front explorer -->
<div class="ex" style="left:511px;top:313px;width:1125px;height:634px;border-color:#8c8c8c">
 <div class="a" style="left:0;top:0;width:1124px;height:632px;font-size:12px;color:#1a1a1a">
  <!-- QA toolbar -->
  <svg class="a" style="left:10px;top:6px" width="14" height="17" viewBox="0 0 14 17"><rect x=".5" y="1" width="12.5" height="15" fill="#fbd873"/><path d="M.5 1h12.5v15H.5z" fill="none" stroke="#e9bf55" stroke-width=".8"/><path d="M10.5 11h2.5v5h-2.5z" fill="#f5cf62" stroke="#dcaa3c" stroke-width=".6"/></svg>
  <div class="a" style="left:31px;top:8px;width:1px;height:11px;background:#777"></div>
  <svg class="a" style="left:43px;top:6px" width="13" height="17" viewBox="0 0 13 17"><path d="M.6 .6H8.6L12.4 4.4V16.4H.6z" fill="#fff" stroke="#555" stroke-width=".9"/><path d="M8.6 .6v3.8h3.8" fill="none" stroke="#888" stroke-width=".8"/><path d="M2.8 9l2.3 2.8 4.6-5.6" fill="none" stroke="#e8542c" stroke-width="1.5"/></svg>
  <svg class="a" style="left:65px;top:7px" width="14" height="17" viewBox="0 0 14 17"><rect x=".5" y=".5" width="11.5" height="15.5" fill="#d8e4f6" stroke="#c5d3ec" stroke-width=".8"/><path d="M10 10.5h3v5.5h-3z" fill="#d2def2" stroke="#b5c6e4" stroke-width=".6"/></svg>
  <svg class="a" style="left:86px;top:12px" width="8" height="8" viewBox="0 0 8 8"><rect x=".3" y=".8" width="7.4" height="1.2" fill="#111"/><path d="M.8 3.2h6.4L4 7z" fill="#111"/></svg>
  <div class="a" style="left:102px;top:8px;width:1px;height:11px;background:#777"></div>
  <div class="a" style="left:109px;top:7px;line-height:16px;color:#9b9b9b;white-space:nowrap">files.sannergmbh.beep.pl</div>
  <svg class="a" style="left:1004px;top:9px" width="12" height="10" viewBox="0 0 12 10" stroke="#444" stroke-width="1"><path d="M1 5.5h10"/></svg>
  <svg class="a" style="left:1048px;top:8px" width="12" height="12" viewBox="0 0 12 12" fill="none" stroke="#444" stroke-width="1"><rect x="1.5" y="1.5" width="9" height="9"/></svg>
  <svg class="a" style="left:1094px;top:8px" width="12" height="12" viewBox="0 0 12 12" stroke="#444" stroke-width="1"><path d="M1 1l10 10M11 1L1 11"/></svg>
  <!-- ribbon tabs -->
  <div class="a" style="left:0;top:30px;width:56px;height:23px;background:#1a5fb4"></div>
  <div class="a" style="left:14px;top:35px;line-height:14px;color:#fff">Datei</div>
  <div class="a" style="left:70px;top:35px;line-height:14px">Start</div>
  <div class="a" style="left:123px;top:35px;line-height:14px">Freigeben</div>
  <div class="a" style="left:204px;top:35px;line-height:14px">Ansicht</div>
  <svg class="a" style="left:1084px;top:37px" width="11" height="7" viewBox="0 0 11 7" fill="none" stroke="#666" stroke-width="1"><path d="M1 1l4.5 4.5L10 1"/></svg>
  <svg class="a" style="left:1104px;top:33px" width="16" height="16" viewBox="0 0 16 16"><circle cx="8" cy="8" r="7" fill="#1a6fd0"/><path d="M5.6 6.2c0-1.4 1.1-2.3 2.5-2.3s2.4.9 2.4 2.2c0 1.9-2.3 1.8-2.3 3.7" fill="none" stroke="#fff" stroke-width="1.6"/><rect x="7.3" y="10.6" width="1.7" height="1.7" fill="#fff"/></svg>
  <div class="a" style="left:0;top:53px;width:1124px;height:1px;background:#dadbdc"></div>
  <!-- nav -->
  <svg class="a" style="left:13px;top:64px" width="14" height="13" viewBox="0 0 14 13" fill="none" stroke="#666" stroke-width="1.7"><path d="M13 6.5H2M6.5 1.5l-5 5 5 5"/></svg>
  <svg class="a" style="left:43px;top:64px" width="14" height="13" viewBox="0 0 14 13" fill="none" stroke="#c9c9c9" stroke-width="1.7"><path d="M1 6.5h11M7.5 1.5l5 5-5 5"/></svg>
  <svg class="a" style="left:69px;top:68px" width="9" height="6" viewBox="0 0 9 6" fill="none" stroke="#777" stroke-width="1.2"><path d="M1 1l3.5 3.5L8 1"/></svg>
  <svg class="a" style="left:86px;top:64px" width="14" height="13" viewBox="0 0 14 13" fill="none" stroke="#555" stroke-width="1.7"><path d="M7 13V2M2 6.5l5-5 5 5"/></svg>
  <div class="a" style="left:106px;top:60px;width:791px;height:22px;border:1px solid #d9d9d9;background:#fff"></div>
  <svg class="a" style="left:111px;top:62px" width="14" height="17" viewBox="0 0 14 17"><rect x=".5" y=".5" width="12.5" height="15" fill="#fbd873" stroke="#e9bf55" stroke-width=".8"/><path d="M10.5 10.5h2.5v5h-2.5z" fill="#f5cf62" stroke="#dcaa3c" stroke-width=".6"/></svg>
  <svg class="a" style="left:132px;top:67px" width="6" height="9" viewBox="0 0 6 9" fill="none" stroke="#666" stroke-width="1.2"><path d="M1 1l3.5 3.5L1 8"/></svg>
  <div class="a" style="left:146px;top:64px;line-height:14px;white-space:nowrap">Internet</div>
  <svg class="a" style="left:196px;top:67px" width="6" height="9" viewBox="0 0 6 9" fill="none" stroke="#666" stroke-width="1.2"><path d="M1 1l3.5 3.5L1 8"/></svg>
  <div class="a" style="left:209px;top:64px;line-height:14px;white-space:nowrap;letter-spacing:0px">ftp.sannergmbh.beep.pl</div>
  <svg class="a" style="left:347px;top:67px" width="6" height="9" viewBox="0 0 6 9" fill="none" stroke="#666" stroke-width="1.2"><path d="M1 1l3.5 3.5L1 8"/></svg>
  <div class="a" style="left:361px;top:64px;line-height:14px;white-space:nowrap;letter-spacing:0px">files.sannergmbh.beep.pl</div>
  <svg class="a" style="left:504px;top:67px" width="6" height="9" viewBox="0 0 6 9" fill="none" stroke="#666" stroke-width="1.2"><path d="M1 1l3.5 3.5L1 8"/></svg>
  <svg class="a" style="left:867px;top:68px" width="10" height="7" viewBox="0 0 10 7" fill="none" stroke="#555" stroke-width="1.2"><path d="M1 1l4 4 4-4"/></svg>
  <div class="a" style="left:880px;top:61px;width:1px;height:20px;background:#e3e3e3"></div>
  <svg class="a" style="left:883px;top:64px" width="13" height="14" viewBox="0 0 13 14" fill="none" stroke="#777" stroke-width="1.3"><path d="M10.5 5a4.5 4.5 0 1 1-1.2-2.3"/><path d="M9.5 .5v3h-3"/></svg>
  <div class="a" style="left:909px;top:60px;width:203px;height:22px;border:1px solid #d9d9d9;background:#fff"></div>
  <div class="a" style="left:919px;top:64px;line-height:14px;white-space:nowrap;color:#6d6d6d;letter-spacing:-0.1px">"files.sannergmbh.beep.pl" d...</div>
  <svg class="a" style="left:1090px;top:64px" width="14" height="14" viewBox="0 0 14 14" fill="none" stroke="#555" stroke-width="1.4"><circle cx="8.5" cy="5.5" r="3.8"/><path d="M5.8 8.2L1.2 12.8"/></svg>
  <!-- nav pane -->
  <div class="a" style="left:1px;top:105px;width:156px;height:24px;background:#d9d9d9"></div>
  <svg class="a" style="left:26px;top:111px" width="16" height="15" viewBox="0 0 16 15"><path d="M9 .8l1.8 3.8 4.2.5-3.1 2.9.8 4.1L9 10l-3.7 2.1.8-4.1L3 5.1l4.2-.5z" fill="#3b8ee0"/><path d="M.5 7.5h3M1 10h2.5M2 12.5h2" stroke="#64a8ea" stroke-width=".9"/></svg>
  <div class="a" style="left:45px;top:110px;line-height:14px">Schnellzugriff</div>
  <svg class="a" style="left:32px;top:135px" width="16" height="12" viewBox="0 0 16 12"><rect x="0" y="0" width="16" height="12" fill="#1e90e8"/><rect x="0" y="0" width="16" height="9.5" fill="#3aa6f2"/><rect x="0" y="10.3" width="16" height="1.7" fill="#0b5fb8"/></svg>
  <div class="a" style="left:53px;top:134px;line-height:14px">Desktop</div>
  <svg class="a" style="left:35px;top:157px" width="13" height="16" viewBox="0 0 13 16"><path d="M.5 .5H9L12.5 4V15.5H.5z" fill="#fff" stroke="#888" stroke-width=".8"/><path d="M2.5 4h3M2.5 6.5h8M2.5 9h8M2.5 11.5h8M2.5 14h8" stroke="#3e8bd8" stroke-width="1"/><path d="M7 9h3.5v3H7z" fill="#557"/></svg>
  <div class="a" style="left:53px;top:158px;line-height:14px">Documents</div>
  <svg class="a" style="left:32px;top:182px" width="16" height="16" viewBox="0 0 16 16"><path d="M5.5 0h5v7.5H15L8 15 1 7.5h4.5z" fill="#2b88d8"/></svg>
  <div class="a" style="left:53px;top:182px;line-height:14px">Downloads</div>
  <svg class="a" style="left:32px;top:207px" width="16" height="12" viewBox="0 0 16 12"><rect x=".5" y=".5" width="15" height="11" fill="#fff" stroke="#999" stroke-width=".9"/><rect x="2" y="2" width="12" height="8" fill="#9fd0f0"/><path d="M2 7c3-2 6-2 12 0v3H2z" fill="#2e6a4a"/></svg>
  <div class="a" style="left:53px;top:206px;line-height:14px">Pictures</div>
  <svg class="a" style="left:34px;top:229px" width="14" height="17" viewBox="0 0 14 17"><rect x="1" y="1" width="11.5" height="15" fill="#fbd873" stroke="#eec55c" stroke-width=".6"/><path d="M10.5 11.5h2.5v4.5h-2.5z" fill="#f6d065" stroke="#e3b445" stroke-width=".6"/></svg>
  <div class="a" style="left:53px;top:230px;line-height:14px">Kowalczyk</div>
  <svg class="a" style="left:142px;top:135px" width="12" height="12"><use href="#pin"/></svg>
  <svg class="a" style="left:142px;top:159px" width="12" height="12"><use href="#pin"/></svg>
  <svg class="a" style="left:142px;top:183px" width="12" height="12"><use href="#pin"/></svg>
  <svg class="a" style="left:142px;top:207px" width="12" height="12"><use href="#pin"/></svg>
  <svg class="a" style="left:24px;top:262px" width="17" height="17" viewBox="0 0 17 17"><rect x=".5" y=".5" width="16" height="11" fill="#3ab0ee"/><rect x="1.5" y="1.5" width="14" height="9" fill="#62c6f6"/><rect x="7.5" y="11.5" width="2" height="2.5" fill="#7ab8d8"/><rect x="3" y="14" width="11" height="1.3" fill="#8ab8d4"/><rect x="1" y="16" width="15" height="1" fill="#a8c4d8"/></svg>
  <div class="a" style="left:45px;top:262px;line-height:14px">Dieser PC</div>
  <svg class="a" style="left:24px;top:293px" width="17" height="17" viewBox="0 0 17 17"><circle cx="11" cy="6" r="5.5" fill="#5aa8e0"/><path d="M8 3c2 0 3 2 2.5 3.5M13 1.5c0 2 1.5 3 2.5 3" stroke="#c8e8f8" stroke-width="1" fill="none"/><rect x=".5" y="7" width="10" height="7" fill="#2ea2e8"/><rect x="1.5" y="8" width="8" height="5" fill="#62c4f4"/><rect x="4.5" y="14" width="2" height="1.5" fill="#7ab"/><rect x="2" y="15.5" width="7" height="1" fill="#8ab"/></svg>
  <div class="a" style="left:45px;top:294px;line-height:14px">Netzwerk</div>
  <div class="a" style="left:158px;top:88px;width:1px;height:520px;background:#f0f0f0"></div>
  <!-- content -->
  <svg class="a" style="left:185px;top:100px" width="32" height="42"><use href="#bigfolder"/></svg>
  <div class="a" style="left:231px;top:105px;line-height:14px">Kowalczyk</div>
  <svg class="a" style="left:185px;top:156px" width="32" height="42"><use href="#blankdoc"/></svg>
  <div class="a" style="left:231px;top:161px;line-height:14px;white-space:nowrap">FileZilla FTP Client</div>
  <svg class="a" style="left:185px;top:212px" width="32" height="42"><use href="#imgdoc"/></svg>
  <div class="a" style="left:231px;top:217px;line-height:14px;white-space:nowrap">grandparents.png</div>
  <svg class="a" style="left:185px;top:268px" width="32" height="42"><use href="#txtdoc"/></svg>
  <div class="a" style="left:231px;top:273px;line-height:14px;white-space:nowrap">work.txt</div>
  <svg class="a" style="left:439px;top:100px" width="32" height="42"><use href="#bigfolder"/></svg>
  <div class="a" style="left:485px;top:105px;line-height:14px">Sanner</div>
  <svg class="a" style="left:694px;top:99px" width="32" height="42"><use href="#imgdoc"/></svg>
  <div class="a" style="left:739px;top:105px;line-height:14px;white-space:nowrap;letter-spacing:-0.35px">2025-04-04 21_50_14-.png</div>
  <svg class="a" style="left:692px;top:152px" width="36" height="47"><use href="#xmldoc"/></svg>
  <div class="a" style="left:739px;top:161px;line-height:14px;white-space:nowrap;letter-spacing:-0.1px">FileZilla-newest.xml</div>
  <svg class="a" style="left:694px;top:211px" width="32" height="42"><use href="#txtdoc"/></svg>
  <div class="a" style="left:739px;top:217px;line-height:14px;white-space:nowrap">test.txt</div>
  <!-- status -->
  <div class="a" style="left:14px;top:614px;line-height:14px;white-space:nowrap;letter-spacing:-0.3px">10 Elemente</div>
  <div class="a" style="left:89px;top:616px;width:1px;height:12px;background:#eee"></div>
  <svg class="a" style="left:1078px;top:613px" width="18" height="15" viewBox="0 0 18 15"><g fill="none" stroke="#999" stroke-width=".9"><rect x=".5" y=".5" width="4" height="4"/><rect x=".5" y="5" width="4" height="4"/><rect x=".5" y="9.5" width="4" height="4.5"/></g><circle cx="2.5" cy="2.5" r=".8" fill="#3a7"/><circle cx="2.5" cy="7" r=".8" fill="#48e"/><circle cx="2.5" cy="11.7" r=".8" fill="#d33"/><g stroke="#777" stroke-width="1.2"><path d="M6.5 2.5h4M12 2.5h4M6.5 7h4M12 7h4M6.5 11.5h4M12 11.5h4"/></g></svg>
  <svg class="a" style="left:1101px;top:614px" width="15" height="12" viewBox="0 0 15 12"><rect x=".5" y=".5" width="14" height="11" fill="#fff" stroke="#999" stroke-width="1"/><rect x="2" y="2" width="11" height="8" fill="#4a90d8"/><path d="M2 6c3-1.5 6-1 11 1v3H2z" fill="#2e6050"/><rect x="2" y="8.5" width="11" height="1.5" fill="#8ac"/></svg>
 </div>
</div>

<!-- login dialog -->
<div class="a" style="left:793px;top:455px;width:335px;height:130px;background:#f6f6f6;border:1px solid #cfcfcf;font-size:12px">
 <div class="a" style="left:7px;top:7px;width:319px;height:24px;background:#00318a"></div>
 <svg class="a" style="left:7px;top:8px" width="23" height="23" viewBox="0 0 23 23"><defs><radialGradient id="gd" cx=".2" cy=".75" r=".8"><stop offset="0" stop-color="#1a78f8"/><stop offset=".55" stop-color="#0a4cb8"/><stop offset="1" stop-color="#0a5ac8"/></radialGradient><linearGradient id="gdr" x1="0" y1="0" x2="1" y2="1"><stop offset="0" stop-color="#fafafa"/><stop offset=".6" stop-color="#d8d4cc"/><stop offset="1" stop-color="#f0ece4"/></linearGradient></defs><circle cx="11.5" cy="11.5" r="9.3" fill="none" stroke="url(#gdr)" stroke-width="2"/><circle cx="11.5" cy="11.5" r="8.2" fill="url(#gd)" stroke="#3a3a40" stroke-width=".6"/><path d="M11 3.8c.6 1.2 1.2 2.4 2 3.8l-1.2 1.6 1.6 3.8-.8 1.2.3 1.4-.6 1.5.4 2" stroke="#dfe8ff" stroke-width=".8" fill="none"/></svg>
 <div class="a" style="left:38px;top:14px;width:10px;height:10px;border-radius:50%;background:#35b445"></div>
 <div class="a" style="left:55px;top:13px;line-height:15px;color:#fff;font-weight:bold;white-space:nowrap;letter-spacing:-0.1px">Anmeldung (Terminal 4er) Mandant: 1</div>
 <div class="a" style="left:275px;top:26px;width:14px;height:2px;background:#fff"></div>
 <svg class="a" style="left:303px;top:13px" width="16" height="16" viewBox="0 0 16 16" stroke="#fff" stroke-width="2.2"><path d="M1.5 1.5l13 13M14.5 1.5l-13 13"/></svg>
 <div class="a" style="left:8px;top:32px;width:318px;height:90px;border:1px solid #d6d6d6;border-top-color:#fff;background:#fafafa"></div>
 <div class="a" style="left:16px;top:42px;line-height:14px;color:#111;letter-spacing:-0.1px">Benutzername</div>
 <div class="a" style="left:101px;top:42px;width:218px;height:19px;background:#f8f8f8;border-top:1px solid #e6e6e6;border-left:1px solid #e6e6e6;border-bottom:2px solid #cfcfcf;border-right:1px solid #cfcfcf"></div>
 <div class="a" style="left:104px;top:43px;line-height:16px;color:#111;font-size:12px;letter-spacing:.2px">sog1917</div>
 <div class="a" style="left:16px;top:66px;line-height:14px;color:#111">Kennwort</div>
 <div class="a" style="left:101px;top:65px;width:218px;height:19px;background:#f8f8f8;border-top:1px solid #e6e6e6;border-left:1px solid #e6e6e6;border-bottom:2px solid #cfcfcf;border-right:1px solid #cfcfcf"></div>
 <div class="a" style="left:106px;top:69px;line-height:12px;color:#222;font-size:10px;letter-spacing:.3px">****</div>
 <div class="a" style="left:16px;top:88px;width:24px;height:24px;border:1px solid #111"></div>
 <svg class="a" style="left:19px;top:91px" width="18" height="18" viewBox="0 0 18 18"><circle cx="9" cy="9" r="8.8" fill="#3aaa3a"/><path d="M4.5 9.3l3 3 6-6.6" stroke="#fff" stroke-width="2.3" fill="none"/></svg>
 <svg class="a" style="left:45px;top:91px" width="18" height="18" viewBox="0 0 18 18"><circle cx="9" cy="9" r="8.8" fill="#e21a35"/><path d="M5.6 5.6l6.8 6.8M12.4 5.6l-6.8 6.8" stroke="#fff" stroke-width="2.3"/></svg>
 <svg class="a" style="left:71px;top:91px" width="18" height="18" viewBox="0 0 18 18"><circle cx="9" cy="9" r="8.8" fill="#0a4aa0"/><path d="M6.3 7c0-1.6 1.2-2.7 2.8-2.7s2.8 1 2.8 2.5c0 2.2-2.6 2-2.6 4.2" stroke="#fff" stroke-width="2" fill="none"/><rect x="8.2" y="12.3" width="2" height="2" fill="#fff"/></svg>
</div>

<div id="tb" class="a">
 <svg class="a" style="left:15px;top:12px" width="18" height="17" viewBox="0 0 18 17" fill="#fff"><path d="M0 2.4L7.3 1.4V8H0zM8.2 1.3L18 0V8H8.2zM0 8.9h7.3v6.7L0 14.6zM8.2 8.9H18V17L8.2 15.7z"/></svg>
 <svg class="a" style="left:63px;top:11px" width="18" height="18" viewBox="0 0 18 18" fill="none" stroke="#fff" stroke-width="1.3"><circle cx="11" cy="7" r="5.8"/><path d="M6.8 11.2L1 17"/></svg>
 <svg class="a" style="left:111px;top:12px" width="18" height="16" viewBox="0 0 18 16" fill="none" stroke="#fff" stroke-width="1.2"><path d="M1 1.5h12M1 14.5h12"/><rect x="1.5" y="4" width="11" height="8"/><path d="M16.5 1v2.5M16.5 5v10"/><rect x="15.5" y="4.2" width="2" height="2" fill="#fff" stroke="none"/></svg>
 <svg class="a" style="left:159px;top:10px" width="23" height="20" viewBox="0 0 23 20"><path d="M1 2.5c0-.8.6-1.5 1.5-1.5h6l2 2h10c.8 0 1.5.6 1.5 1.5V18c0 .8-.6 1.5-1.5 1.5h-18C1.6 19.5 1 18.8 1 18z" fill="#f8d775"/><path d="M1 5h21v2H1z" fill="#f0c44c"/><path d="M6.5 19.5v-6c0-.8.6-1.5 1.5-1.5h7c.8 0 1.5.6 1.5 1.5v6h-3v-4h-4v4z" fill="#3aa0e8"/><rect x="1" y="1" width="7" height="2" fill="#fff" opacity=".6"/></svg>
 <div class="a" style="left:151px;top:38px;width:31px;height:2px;background:#76b9ed"></div>
 <div class="a" style="left:182px;top:38px;width:9px;height:2px;background:#4f7fa8"></div>
 <div class="a" style="left:196px;top:0;width:44px;height:40px;background:#333538"></div>
 <div class="a" style="left:240px;top:0;width:4px;height:40px;background:#26282b"></div>
 <svg class="a" style="left:208px;top:8px" width="25" height="25" viewBox="0 0 25 25"><defs><radialGradient id="tg" cx=".4" cy=".35" r=".65"><stop offset="0" stop-color="#2a70e0"/><stop offset="1" stop-color="#0a38a0"/></radialGradient></defs><circle cx="12.5" cy="12.5" r="11" fill="url(#tg)" stroke="#d8d8d8" stroke-width="2"/><path d="M11.5 2.5c1.5 2 0 3.5 1.2 5.5s-1.2 3.2-.3 5.5-1 3.5.3 5.8-.6 3-.3 4.5" stroke="#dfe8ff" stroke-width=".8" fill="none"/></svg>
 <div class="a" style="left:196px;top:38px;width:44px;height:2px;background:#76b9ed"></div>
 <div class="a" style="left:240px;top:38px;width:4px;height:2px;background:#4f7fa8"></div>
 <svg class="a" style="left:252px;top:5px" width="32" height="32" viewBox="0 0 50 50"><circle cx="24.5" cy="24.3" r="19.5" fill="url(#eg1)"/><path d="M5 24.3C5 17.5 11 13.5 17.5 13.5 23.5 13.5 27.5 17 28 21 24 21.5 21 25 21 29 21 33 25 36.5 32 36.5 35.5 36.5 39 35.8 42 34.5 39 40.5 32.5 44 24.5 44 13.7 44 5 35 5 24.3Z" fill="url(#eg2)"/><path d="M28 21C30 22.5 28.5 25.5 28.5 27.5 28.5 30 31.5 31.5 36 31.5 39.5 31.5 42.5 30 44 27.5 43.7 30 43 32.5 42 34.5 39 35.8 35.5 36.5 32 36.5 25 36.5 21 33 21 29 21 25 24 21.5 28 21Z" fill="#020408"/><rect x="3" y="30" width="21" height="15" rx="2" fill="#e0962a"/><rect x="3" y="35.5" width="21" height="2" fill="#a86010"/><rect x="10" y="26.5" width="7" height="4" fill="none" stroke="#c07a10" stroke-width="2"/><rect x="12" y="34.5" width="3" height="3" fill="#f8d060"/></svg>
 <div class="a" style="left:249px;top:38px;width:40px;height:2px;background:#76b9ed"></div>
 <svg class="a" style="left:1734px;top:16px" width="14" height="8" viewBox="0 0 14 8" fill="none" stroke="#fff" stroke-width="1.2"><path d="M1 7.5L7 1.5l6 6"/></svg>
 <svg class="a" style="left:1756px;top:13px" width="18" height="15" viewBox="0 0 18 15" fill="none" stroke="#fff" stroke-width="1.1"><rect x="2.5" y="1" width="15" height="10"/><path d="M10 11v2.5M6.5 13.5h7"/><rect x=".5" y="1" width="4" height="4" fill="#000"/><path d="M2.5 5v9"/><path d="M1 3l1.5 1.5L4 3" stroke-width=".9"/></svg>
 <svg class="a" style="left:1780px;top:13px" width="18" height="16" viewBox="0 0 18 16"><path d="M1 5h3l4-4v13L4 10H1z" fill="none" stroke="#fff" stroke-width="1.1"/><circle cx="12.5" cy="10.5" r="4.8" fill="#e21a2a"/><path d="M10.5 8.5l4 4M14.5 8.5l-4 4" stroke="#fff" stroke-width="1.2"/></svg>
 <div class="a" style="left:1800px;top:3px;width:68px;text-align:center;color:#fff;font-size:12px;line-height:16px;letter-spacing:-0.2px">21:52</div>
 <div class="a" style="left:1800px;top:21px;width:68px;text-align:center;color:#fff;font-size:12px;line-height:16px;letter-spacing:-0.3px">04.04.2025</div>
 <svg class="a" style="left:1878px;top:11px" width="26" height="26" viewBox="0 0 26 26"><path d="M1 1.5h16v12H8l-3 3v-3H1z" fill="#fff"/><path d="M4 5h10M4 8h10M4 11h7" stroke="#000" stroke-width="1.2"/><circle cx="17" cy="17" r="7.8" fill="#2b2b2b" stroke="#777" stroke-width="1"/><path d="M15.8 13.8l2-1.3V21" stroke="#fff" stroke-width="1.6" fill="none"/></svg>
 <div class="a" style="left:1915px;top:0;width:1px;height:40px;background:#555"></div>
</div>
<!-- activation watermark -->
<div class="a" style="left:1435px;top:945px;font-size:20px;line-height:26px;color:rgba(160,160,160,0.72);white-space:nowrap">Windows aktivieren</div>
<div class="a" style="left:1435px;top:972px;font-size:14.5px;line-height:18px;color:rgba(195,195,195,0.64);white-space:nowrap">Wechseln Sie zu den Einstellungen, um Windows zu aktivieren.</div>
<!-- cursor -->
<svg class="a" style="left:1679px;top:843px" width="23" height="11" viewBox="0 0 23 11"><path d="M.8 5.5L5.6 .8v3h11.8v-3l4.8 4.7-4.8 4.7v-3H5.6v3z" fill="#fff" stroke="#000" stroke-width="1" stroke-linejoin="round"/></svg>
</body></html>
